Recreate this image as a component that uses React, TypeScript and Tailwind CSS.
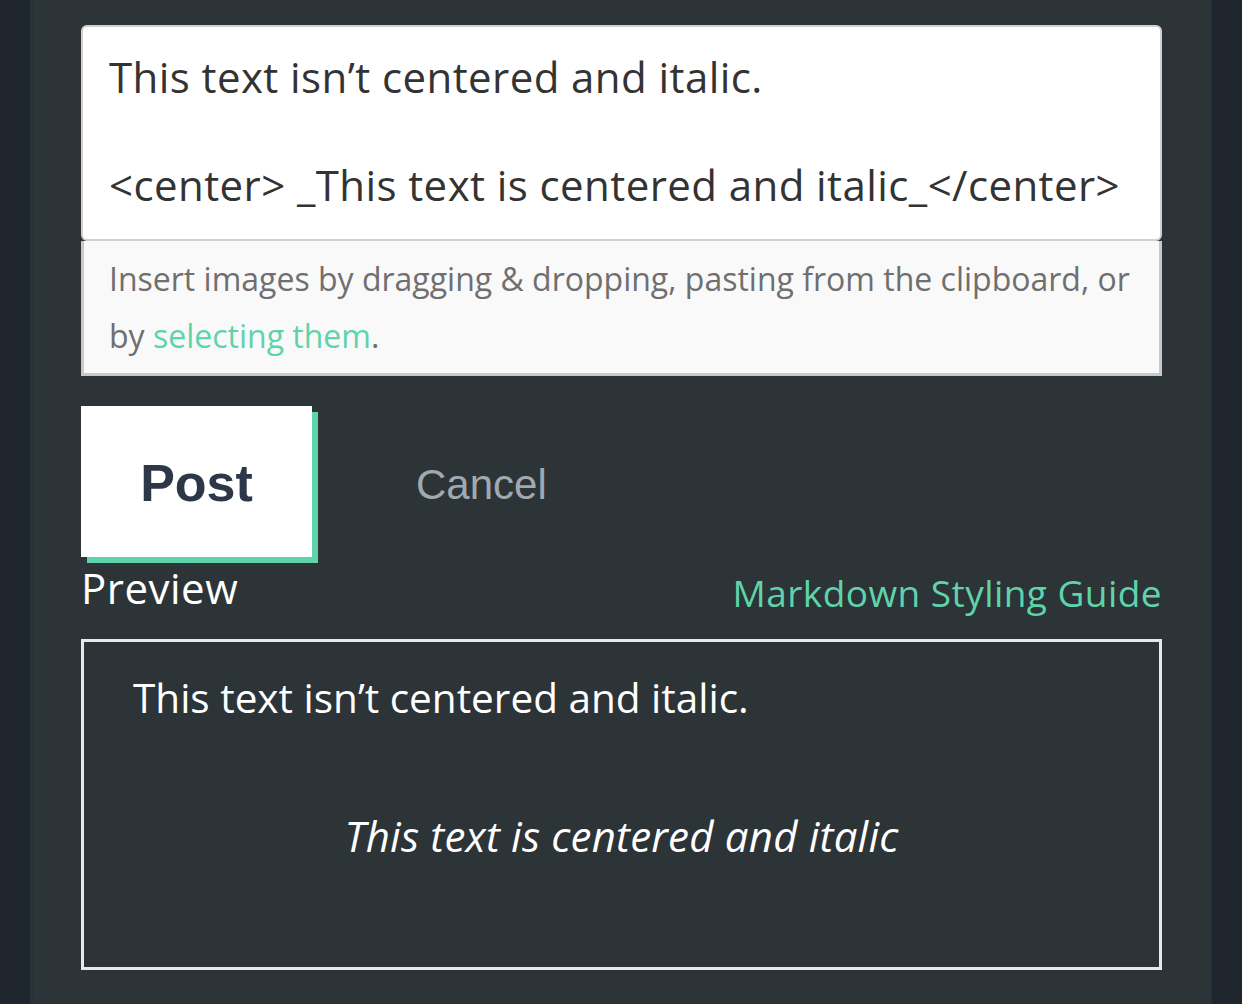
export default function App() {
  const sans = "font-['Open_Sans','Noto_Sans',sans-serif]";
  return (
    <div className="flex h-[1004px] overflow-hidden bg-[#2c3437]">
      <aside className="w-[33px] shrink-0 bg-[#1e252c] border-r-[3px] border-[#28313a]" />
      <main className={`flex-1 px-[48px] pt-[25px] ${sans}`}>
        <div className="rounded-md border-2 border-[#d0d0d0] bg-white px-[26px] pt-[23px] pb-[27px] text-[42px] leading-[54px] tracking-[0.01em] text-[#333]">
          <p>This text isn’t centered and italic.</p>
          <p>&nbsp;</p>
          <p>&lt;center&gt; _This text is centered and italic_&lt;/center&gt;</p>
        </div>
        <div className="border-x-[3px] border-b-[3px] border-[#c9c9c9] bg-[#f9f9f9] px-[25px] py-[9px] text-[32px] leading-[57px] text-[#6f6f6f]">
          Insert images by dragging &amp; dropping, pasting from the clipboard, or by{' '}
          <a className="text-[#5fd3aa]">selecting them</a>.
        </div>
        <div className="mt-[30px] flex items-center">
          <button className="h-[151px] w-[231px] bg-white shadow-[6px_6px_0_#5fd3aa] pt-[3px] font-['Liberation_Sans',Arial,sans-serif] text-[52px] font-bold text-[#2d3748]">
            Post
          </button>
          <button className="ml-[104px] pt-[6px] font-['Liberation_Sans',Arial,sans-serif] text-[42px] text-[#a0a9b2]">
            Cancel
          </button>
        </div>
        <div className="mt-[4px] flex items-end justify-between">
          <h2 className="text-[42px] leading-[54px] tracking-[0.012em] text-white">Preview</h2>
          <a className="text-[37px] leading-[44px] tracking-[0.012em] text-[#5fd3aa]">Markdown Styling Guide</a>
        </div>
        <div className="mt-[24px] h-[331px] border-[3px] border-[#e8e8e8] px-[49px] pt-[29px] leading-[54px] text-white">
          <p className="text-[40.5px]">This text isn’t centered and italic.</p>
          <p className="mt-[84px] text-center text-[42px] italic tracking-[0.005em]">This text is centered and italic</p>
        </div>
      </main>
      <aside className="w-[32px] shrink-0 bg-[#1e252c] border-l-2 border-[#28313a]" />
    </div>
  );
}
